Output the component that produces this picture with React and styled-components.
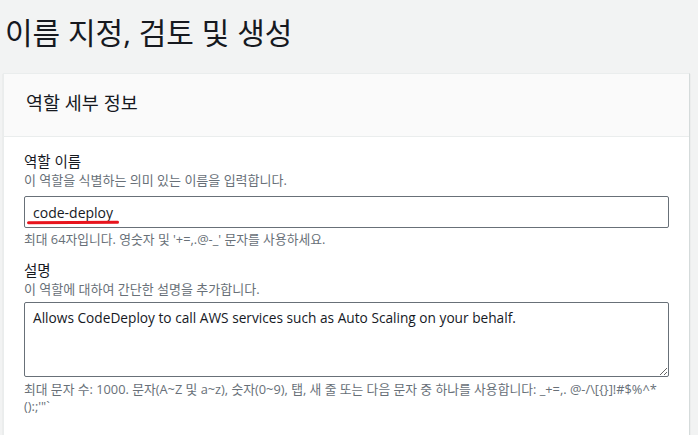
import React from "react";
import styled, { createGlobalStyle } from "styled-components";

const GlobalStyle = createGlobalStyle`
  body {
    margin: 0;
    background: #f2f3f3;
    font-family: "Open Sans", "Noto Sans CJK KR", sans-serif;
    color: #16191f;
  }
`;

const Page = styled.main`
  padding: 15px 8px 0 3px;
  height: 435px;
  box-sizing: border-box;
  overflow: hidden;
`;

const Title = styled.h1`
  margin: 0 0 22px 2px;
  font-size: 30px;
  line-height: 36px;
  font-weight: 400;
`;

const Card = styled.section`
  width: 687px;
  box-sizing: border-box;
  background: #fff;
  border: 1px solid #eaeded;
  border-right-color: #d5dbdb;
  border-bottom-color: #d5dbdb;
  box-shadow: 0 1px 1px rgba(0, 28, 36, 0.15);
`;

const CardHeader = styled.header`
  background: #fafafa;
  border-bottom: 1px solid #eaeded;
  padding: 18px 22px 22px;
  h2 {
    margin: 0;
    font-size: 18.5px;
    line-height: 22px;
    font-weight: 400;
  }
`;

const CardBody = styled.div`
  padding: 15px 20px 20px;
  display: flex;
  flex-direction: column;
`;

const Field = styled.div`
  display: flex;
  flex-direction: column;
  margin-bottom: ${(p) => p.$gap || 0}px;
`;

const Label = styled.label`
  font-size: 14.5px;
  line-height: 20px;
`;

const Description = styled.div`
  font-size: 13px;
  line-height: 16px;
  color: #687078;
  margin-bottom: ${(p) => p.$after}px;
`;

const Hint = styled.div`
  font-size: 12.8px;
  line-height: 17px;
  color: #687078;
  margin-top: ${(p) => p.$before}px;
`;

const InputWrap = styled.div`
  position: relative;
`;

const TextInput = styled.input`
  width: 100%;
  height: 32px;
  box-sizing: border-box;
  border: 1px solid #687078;
  border-radius: 2px;
  padding: 0 8px;
  font-family: "Open Sans", "Noto Sans CJK KR", sans-serif;
  font-size: 14px;
  color: #16191f;
  outline: none;
`;

const RedMark = styled.span`
  position: absolute;
  left: 3px;
  top: 25px;
  width: 92px;
  height: 2.5px;
  border-radius: 2px;
  background: #e8141d;
  transform: rotate(-0.4deg);
`;

const TextArea = styled.textarea`
  width: 100%;
  height: 75px;
  box-sizing: border-box;
  border: 1px solid #687078;
  border-radius: 2px;
  padding: 5px 8px;
  font-family: "Open Sans", "Noto Sans CJK KR", sans-serif;
  font-size: 13.7px;
  line-height: 20px;
  color: #16191f;
  outline: none;
  display: block;
`;

const charsHint =
  "최대 문자 수: 1000. 문자(A~Z 및 a~z), 숫자(0~9), 탭, 새 줄 또는 다음 문자 중 하나를 사용합니다: _+=,. @-/\\[{}]!#$%^*";

export default function App() {
  return (
    <>
      <GlobalStyle />
      <Page>
        <Title>이름 지정, 검토 및 생성</Title>
        <Card>
          <CardHeader>
            <h2>역할 세부 정보</h2>
          </CardHeader>
          <CardBody>
            <Field $gap={13}>
              <Label>역할 이름</Label>
              <Description $after={8}>이 역할을 식별하는 의미 있는 이름을 입력합니다.</Description>
              <InputWrap>
                <TextInput defaultValue="code-deploy" />
                <RedMark />
              </InputWrap>
              <Hint $before={3}>최대 64자입니다. 영숫자 및 '+=,.@-_' 문자를 사용하세요.</Hint>
            </Field>
            <Field>
              <Label>설명</Label>
              <Description $after={5}>이 역할에 대하여 간단한 설명을 추가합니다.</Description>
              <TextArea defaultValue="Allows CodeDeploy to call AWS services such as Auto Scaling on your behalf." />
              <Hint $before={4}>
                {charsHint}
                <br />
                {"():;'\"`"}
              </Hint>
            </Field>
          </CardBody>
        </Card>
      </Page>
    </>
  );
}
